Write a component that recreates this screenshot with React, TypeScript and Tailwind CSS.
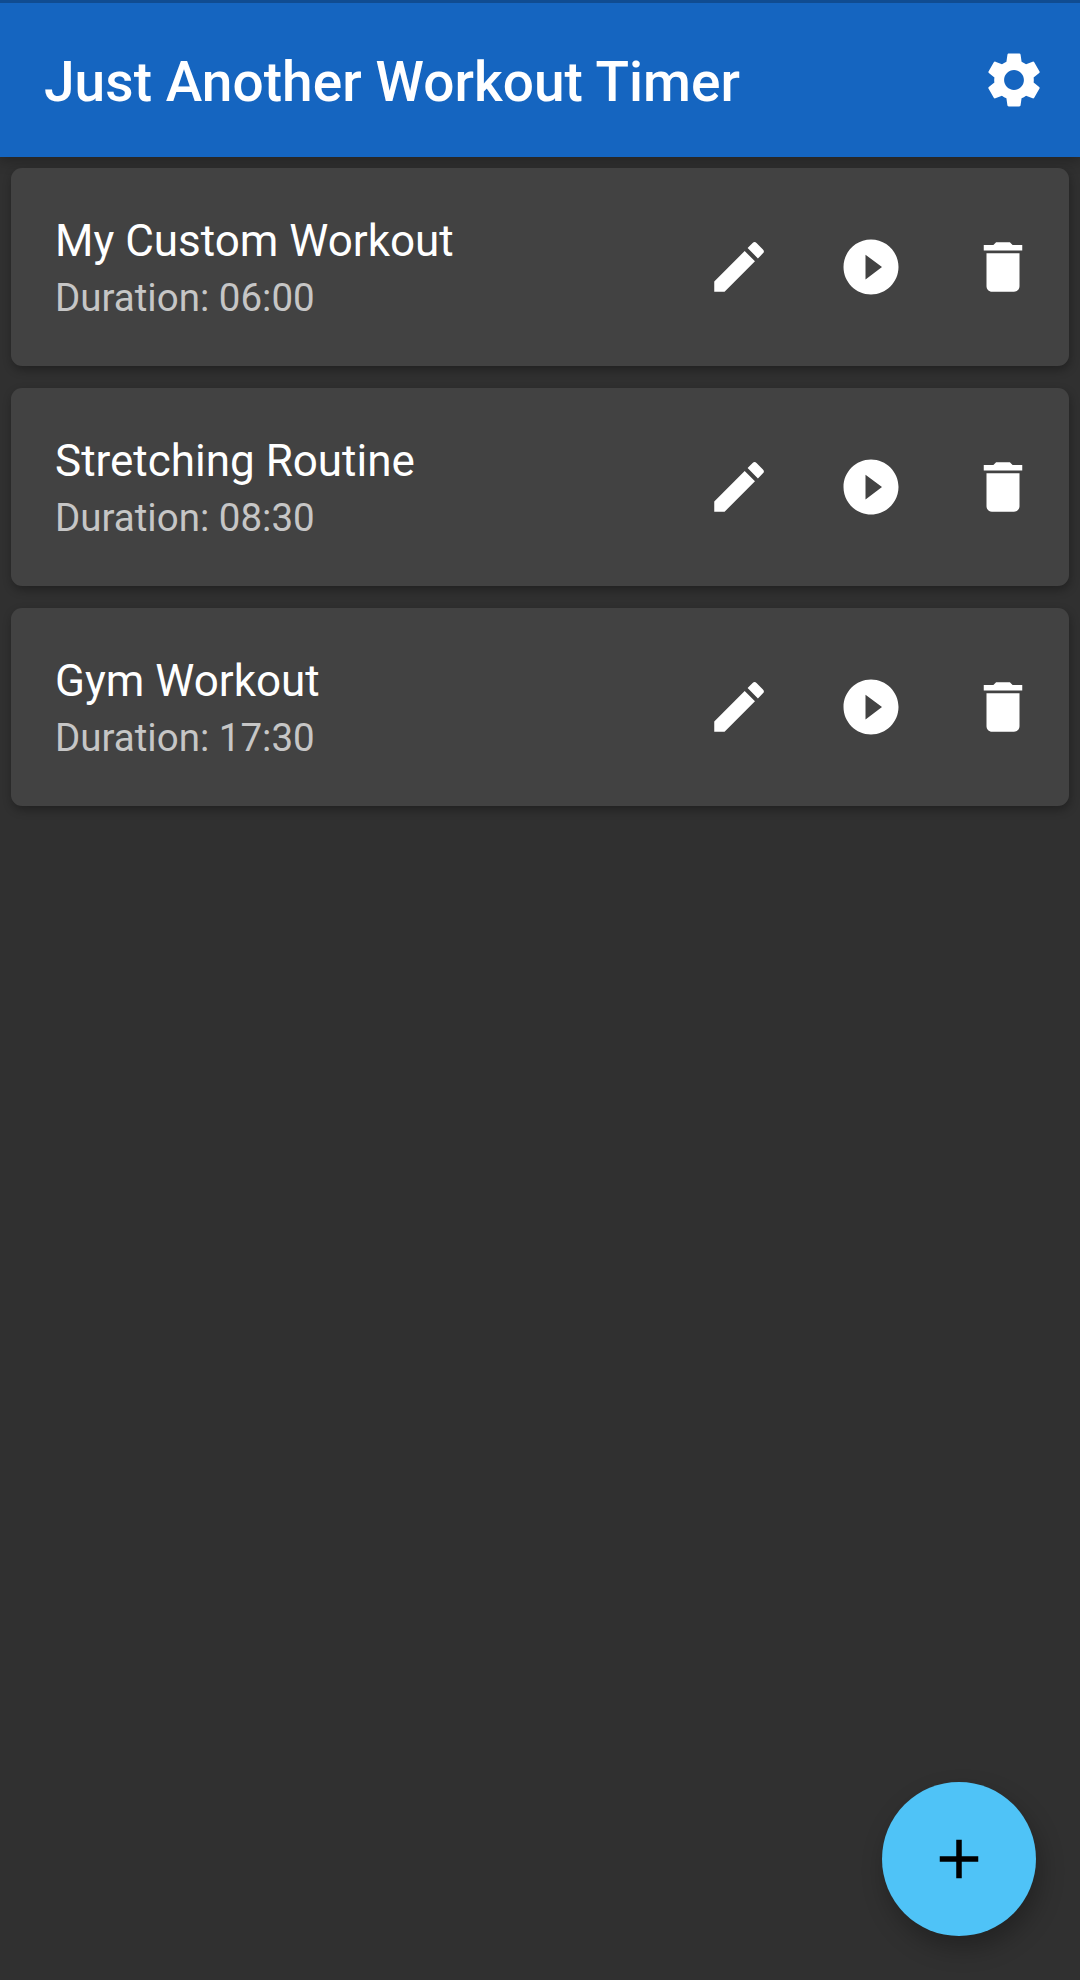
import React from "react";
import { MdSettings, MdEdit, MdPlayCircleFilled, MdDelete, MdAdd } from "react-icons/md";

const workouts = [
  { title: "My Custom Workout", duration: "06:00" },
  { title: "Stretching Routine", duration: "08:30" },
  { title: "Gym Workout", duration: "17:30" },
];

export default function App() {
  return (
    <div className="relative flex h-[1980px] w-[1080px] flex-col overflow-hidden bg-[#303030] font-['Roboto',sans-serif] text-white">
      <header className="flex h-[157px] shrink-0 items-center justify-between border-t-[3px] border-[#104c91] bg-[#1565c0] pr-[33px] pl-11 shadow-[0_4px_12px_rgba(0,0,0,0.25)]">
        <h1 className="pt-[3px] text-[55px] leading-[64px] font-medium tracking-[0.06px] whitespace-nowrap">Just Another Workout Timer</h1>
        <button aria-label="Settings"><MdSettings size={66} /></button>
      </header>
      <main className="flex flex-col gap-[22px] px-[11px] pt-[11px]">
        {workouts.map((w) => (
          <article key={w.title} className="flex h-[198px] items-center justify-between rounded-[11px] bg-[#424242] pr-[33px] pl-11 shadow-[1px_4px_10px_rgba(0,0,0,0.3)]">
            <div className="pt-[5px] whitespace-nowrap">
              <h2 className="text-[44px] leading-[52px]">{w.title}</h2>
              <p className="mt-[5px] text-[38.5px] leading-[52px] text-[#c6c6c6]">Duration: {w.duration}</p>
            </div>
            <div className="flex items-center gap-[66px]">
              <button aria-label="Edit"><MdEdit size={66} /></button>
              <button aria-label="Play"><MdPlayCircleFilled size={66} /></button>
              <button aria-label="Delete"><MdDelete size={66} /></button>
            </div>
          </article>
        ))}
      </main>
      <button aria-label="Add" className="absolute right-11 bottom-11 flex h-[154px] w-[154px] items-center justify-center rounded-full bg-[#4fc3f7] text-black shadow-[4px_12px_24px_rgba(0,0,0,0.28)]">
        <MdAdd size={66} />
      </button>
    </div>
  );
}
